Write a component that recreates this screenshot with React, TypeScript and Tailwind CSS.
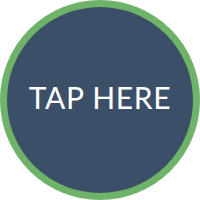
import React from 'react';

export default function App() {
  return (
    <div className="w-[200px] h-[200px] bg-white flex items-center justify-center">
      <button className="w-[200px] h-[200px] rounded-full border-[7px] border-[#6fb36a] bg-[#3c4f68] flex items-center justify-center">
        <span className="text-white text-[30px] leading-none tracking-[0.7px] font-['Lato',sans-serif] font-normal mb-[6px]">TAP HERE</span>
      </button>
    </div>
  );
}
